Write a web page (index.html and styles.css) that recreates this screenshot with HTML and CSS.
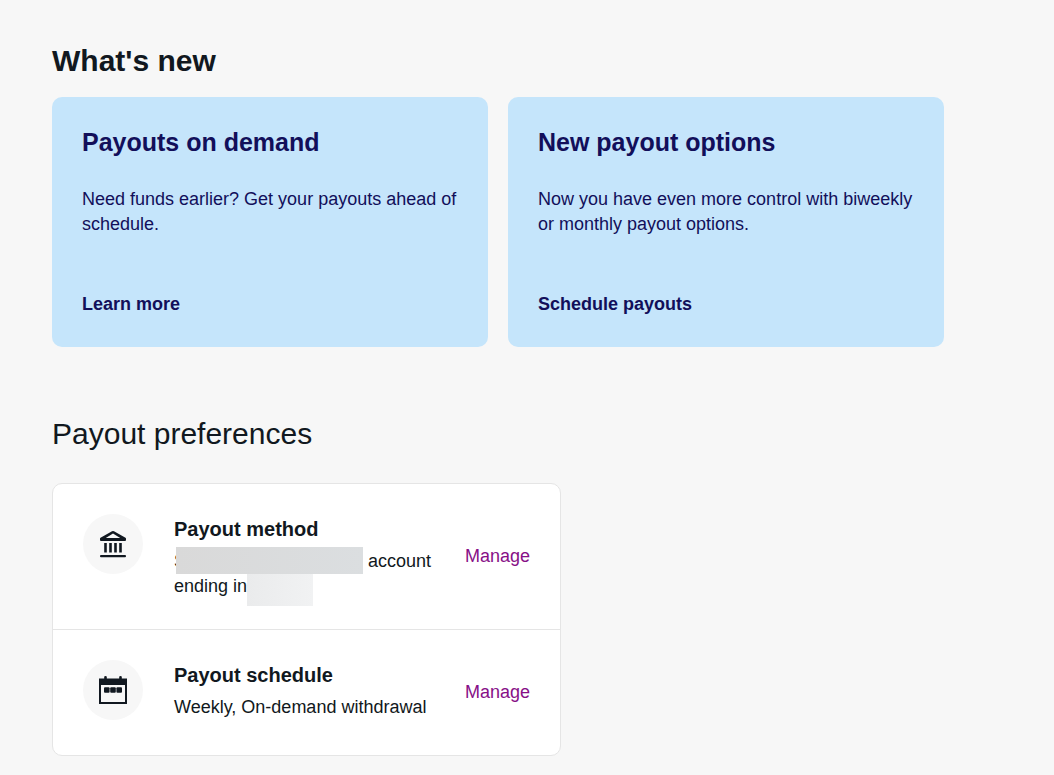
FILE: index.html
```html
<!DOCTYPE html>
<html lang="en">

<head>
    <meta charset="UTF-8">
    <meta name="viewport" content="width=device-width, initial-scale=1.0">
    <title>Payouts</title>
    <link rel="stylesheet" href="styles.css">
</head>

<body>
    <main class="page">
        <section class="news">
            <h1 class="news-title">What's new</h1>
            <div class="news-list">
                <article class="news-card">
                    <h2>Payouts on demand</h2>
                    <p>Need funds earlier? Get your payouts ahead of schedule.</p>
                    <a href="#">Learn more</a>
                </article>
                <article class="news-card">
                    <h2>New payout options</h2>
                    <p>Now you have even more control with biweekly or monthly payout options.</p>
                    <a href="#">Schedule payouts</a>
                </article>
            </div>
        </section>

        <section class="prefs">
            <h2 class="prefs-title">Payout preferences</h2>
            <div class="prefs-card">
                <div class="pref">
                    <span class="pref-icon">
                        <svg width="30" height="30" viewBox="0 0 30 30" aria-hidden="true">
                            <path fill="#111820" fill-rule="evenodd" d="M14 2.300Q15 1.700 16 2.300L27.500 8.700Q28 9 28 9.600V11Q28 12 27 12H3Q2 12 2 11V9.600Q2 9 2.500 8.700zM15 4.500 7.800 9h14.400z" />
                            <path fill="#111820" d="M6.200 14h2.600v9.500H6.200zM11.200 14h2.600v9.500h-2.600zM16.200 14h2.600v9.500h-2.600zM21.200 14h2.600v9.500h-2.600z" />
                            <rect x="2" y="26" width="26" height="2.200" rx="1" fill="#111820" />
                        </svg>
                    </span>
                    <div class="pref-text">
                        <h3>Payout method</h3>
                        <p><span class="mask mask-bank">S</span> account<br>ending in<span class="mask mask-number"></span></p>
                    </div>
                    <a href="#">Manage</a>
                </div>
                <div class="pref">
                    <span class="pref-icon">
                        <svg width="30" height="30" viewBox="0 0 30 30" aria-hidden="true">
                            <path fill="#111820" fill-rule="evenodd" d="M1 3.500h5.200V2q0-1 1.300-1t1.300 1v1.500h12.400V2q0-1 1.300-1t1.300 1v1.500H29V29H1zM3 10v17h24V10z" />
                            <rect x="6" y="12.200" width="5.600" height="5.600" rx="1" fill="#111820" />
                            <rect x="12.200" y="12.200" width="5.600" height="5.600" rx="1" fill="#111820" />
                            <rect x="18.400" y="12.200" width="5.600" height="5.600" rx="1" fill="#111820" />
                        </svg>
                    </span>
                    <div class="pref-text">
                        <h3>Payout schedule</h3>
                        <p>Weekly, On-demand withdrawal</p>
                    </div>
                    <a href="#">Manage</a>
                </div>
            </div>
        </section>
    </main>
</body>

</html>
```
FILE: styles.css
```css
* {
    box-sizing: border-box;
}

body,
h1,
h2,
h3,
p {
    margin: 0;
}

body {
    background: #f7f7f7;
    color: #111820;
    font-family: "Liberation Sans", Arial, sans-serif;
    font-size: 18px;
    line-height: 25px;
}

a {
    text-decoration: none;
}

.page {
    max-width: 996px;
    padding: 41px 52px 19px;
}

.news-title,
.prefs-title {
    font-size: 30px;
    line-height: 40px;
}

.prefs-title {
    font-weight: normal;
}

.news-list {
    display: grid;
    grid-template-columns: 1fr 1fr;
    gap: 20px;
    margin-top: 16px;
}

.news-card {
    display: flex;
    flex-direction: column;
    min-height: 250px;
    padding: 30px;
    border-radius: 10px;
    background: #c5e5fb;
    color: #120f5a;
}

.news-card h2 {
    margin-bottom: 30px;
    font-size: 25px;
    line-height: 30px;
}

.news-card a {
    margin-top: auto;
    color: inherit;
    font-weight: bold;
}

.prefs {
    margin-top: 67px;
}

.prefs-card {
    max-width: 509px;
    margin-top: 29px;
    border: 1px solid #e5e5e5;
    border-radius: 10px;
    background: #fff;
}

.pref {
    display: flex;
    align-items: center;
    padding: 30px;
}

.pref + .pref {
    border-top: 1px solid #e5e5e5;
}

.pref-icon {
    display: flex;
    flex: none;
    align-items: center;
    align-self: flex-start;
    justify-content: center;
    width: 60px;
    height: 60px;
    margin-right: 31px;
    border-radius: 50%;
    background: #f7f7f7;
}

.pref-text {
    flex: 1;
    min-height: 65px;
}

.pref-text h3 {
    margin-bottom: 5px;
    font-size: 20px;
    line-height: 30px;
}

.pref a {
    color: #871087;
}

/* grey blocks over the account details */
.mask {
    position: relative;
    display: inline-block;
    height: 25px;
    vertical-align: top;
}

.mask::after {
    content: "";
    position: absolute;
}

.mask-bank {
    width: 189px;
}

.mask-bank::after {
    inset: -2px 0 0 2px;
    background: linear-gradient(90deg, #d9d9d9, #dbdee0);
}

.mask-number {
    width: 66px;
}

.mask-number::after {
    inset: 0 0 -7px;
    background: linear-gradient(90deg, #eaebec, #f1f2f3);
}
```
